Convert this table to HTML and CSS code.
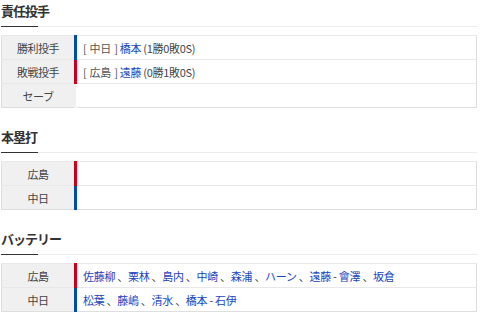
FILE: index.html
```html
<!DOCTYPE html>
<html lang="ja">
<head>
<meta charset="utf-8">
<link rel="stylesheet" href="styles.css">
</head>
<body>
<section class="sec">
  <h2 class="sec-title">責任投手</h2>
  <table class="tbl">
    <tr><th>勝利投手</th><td class="team-d"><span class="tm">[ 中日 ]</span> <a class="pl">橋本</a> <span class="rec">(1勝0敗0S)</span></td></tr>
    <tr><th>敗戦投手</th><td class="team-c"><span class="tm">[ 広島 ]</span> <a class="pl">遠藤</a> <span class="rec">(0勝1敗0S)</span></td></tr>
    <tr><th>セーブ</th><td></td></tr>
  </table>
</section>
<section class="sec">
  <h2 class="sec-title">本塁打</h2>
  <table class="tbl">
    <tr><th>広島</th><td class="team-c"></td></tr>
    <tr><th>中日</th><td class="team-d"></td></tr>
  </table>
</section>
<section class="sec last">
  <h2 class="sec-title">バッテリー</h2>
  <table class="tbl">
    <tr><th>広島</th><td class="team-c"><a class="pl">佐藤柳</a> 、<a class="pl">栗林</a> 、<a class="pl">島内</a> 、<a class="pl">中崎</a> 、<a class="pl">森浦</a> 、<a class="pl">ハーン</a> 、<a class="pl">遠藤</a> - <a class="pl">會澤</a> 、<a class="pl">坂倉</a></td></tr>
    <tr><th>中日</th><td class="team-d"><a class="pl">松葉</a> 、<a class="pl">藤嶋</a> 、<a class="pl">清水</a> 、<a class="pl">橋本</a> - <a class="pl">石伊</a></td></tr>
  </table>
</section>
</body>
</html>
```
FILE: styles.css
```css
html, body { margin: 0; padding: 0; background: #fff; }
body {
  font-family: "Noto Sans CJK JP", "Noto Sans", sans-serif;
  color: #333;
  padding: 0 3px 0 1px;
}
.sec { margin-bottom: 18px; }
.sec.last { margin-bottom: 0; }
.sec-title {
  margin: 0 0 8px 0;
  height: 27px;
  box-sizing: border-box;
  padding-top: 2px;
  font-size: 13px;
  line-height: 18px;
  font-weight: bold;
  letter-spacing: -1px;
  color: #333;
  border-bottom: 1px solid #ececec;
  position: relative;
}
.sec-title::after {
  content: "";
  position: absolute;
  left: 0;
  bottom: -1px;
  width: 37px;
  height: 1px;
  background: #333;
}
.tbl {
  width: 100%;
  border-collapse: collapse;
  border: 1px solid #dedede;
  font-size: 11px;
}
.tbl tr { height: 24px; }
.tbl th, .tbl td {
  border-top: 1px solid #e8e8e8;
  padding: 0;
  height: 23px;
  line-height: 14px;
}
.tbl th {
  width: 72px;
  background: #f0f0f0;
  font-weight: normal;
  text-align: center;
  color: #444;
  letter-spacing: -0.5px;
}
.tbl td {
  padding-left: 6px;
  border-left: 3px solid transparent;
  color: #444;
  letter-spacing: -0.3px;
}
.tbl td.team-c { border-left-color: #c8001e; }
.tbl td.team-d { border-left-color: #004e9d; }
.pl { color: #2244bb; text-decoration: none; }
.tm { color: #555; word-spacing: 1px; }
.rec { color: #444; }
```
